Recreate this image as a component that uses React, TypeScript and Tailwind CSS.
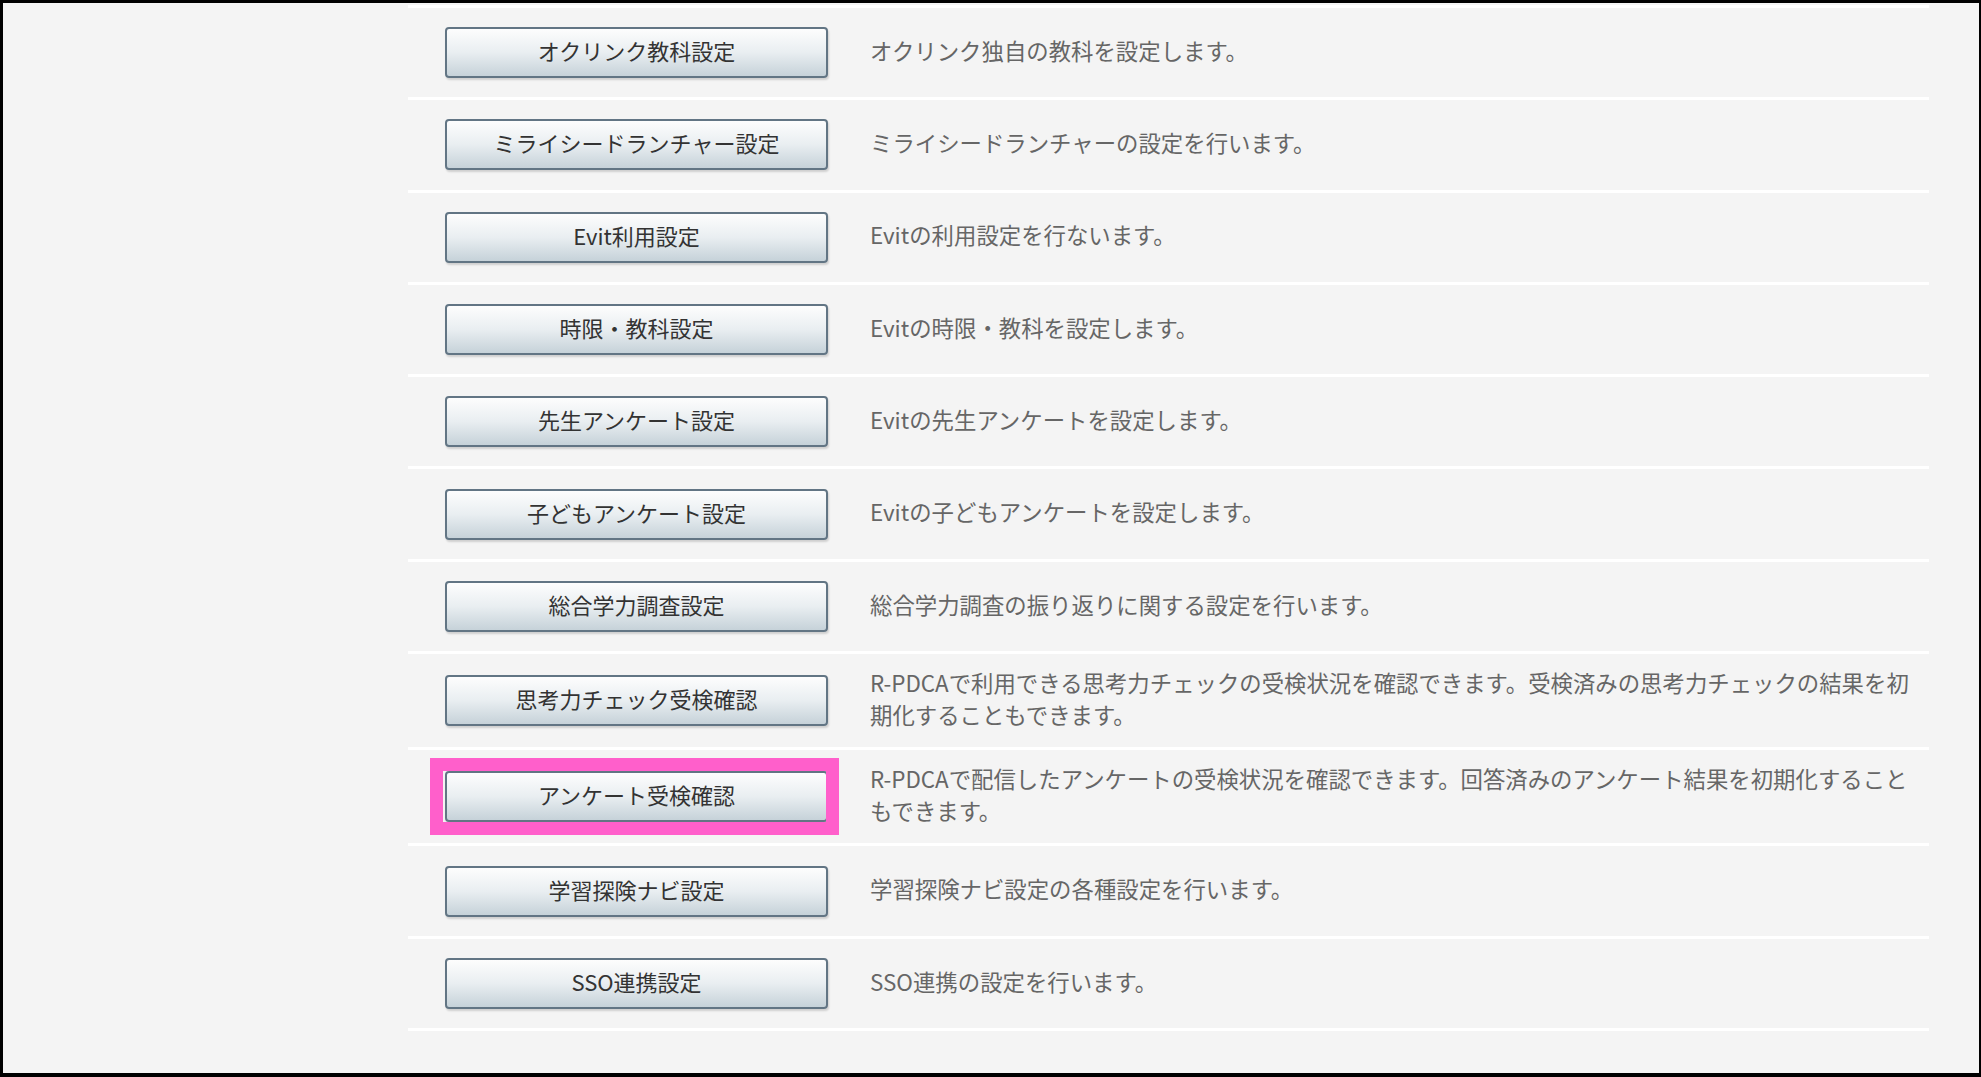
import React from 'react';

type Item = { label: string; desc: string; highlight?: boolean };

const items: Item[] = [
  { label: 'オクリンク教科設定', desc: 'オクリンク独自の教科を設定します。' },
  { label: 'ミライシードランチャー設定', desc: 'ミライシードランチャーの設定を行います。' },
  { label: 'Evit利用設定', desc: 'Evitの利用設定を行ないます。' },
  { label: '時限・教科設定', desc: 'Evitの時限・教科を設定します。' },
  { label: '先生アンケート設定', desc: 'Evitの先生アンケートを設定します。' },
  { label: '子どもアンケート設定', desc: 'Evitの子どもアンケートを設定します。' },
  { label: '総合学力調査設定', desc: '総合学力調査の振り返りに関する設定を行います。' },
  {
    label: '思考力チェック受検確認',
    desc: 'R-PDCAで利用できる思考力チェックの受検状況を確認できます。受検済みの思考力チェックの結果を初期化することもできます。',
  },
  {
    label: 'アンケート受検確認',
    desc: 'R-PDCAで配信したアンケートの受検状況を確認できます。回答済みのアンケート結果を初期化することもできます。',
    highlight: true,
  },
  { label: '学習探険ナビ設定', desc: '学習探険ナビ設定の各種設定を行います。' },
  { label: 'SSO連携設定', desc: 'SSO連携の設定を行います。' },
];

const SettingRow = ({ item }: { item: Item }) => (
  <div className="flex items-center border-b-[3px] border-white py-[15px] pl-[37px]">
    <div className="relative flex h-[59.3px] shrink-0 items-center">
      <button className="h-[51px] w-[383px] rounded-[4px] border-2 border-[#627584] bg-gradient-to-b from-[#fdfdfd] via-[#e9eef1] to-[#c6d2d9] pb-[4px] text-[22px] text-[#333] shadow-[1px_2px_2px_rgba(0,0,0,0.15)]">
        {item.label}
      </button>
      {item.highlight && (
        <div className="pointer-events-none absolute -left-[15px] top-[-9px] h-[77px] w-[409px] border-[13px] border-[#ff5fcb]" />
      )}
    </div>
    <p className="ml-[42px] w-[1052px] -translate-y-[2px] text-[22.4px] leading-[31.6px] text-[#666]">{item.desc}</p>
  </div>
);

export default function App() {
  return (
    <div className="box-border h-[1077px] w-[1981px] border-t-[3px] border-r-2 border-b-4 border-l-[3px] border-black bg-[#f4f4f4] pt-[2px] font-['Noto_Sans_CJK_JP',sans-serif]">
      <div className="ml-[405px] w-[1521px] border-t-[3px] border-white">
        {items.map((item) => (
          <SettingRow key={item.label} item={item} />
        ))}
      </div>
    </div>
  );
}
